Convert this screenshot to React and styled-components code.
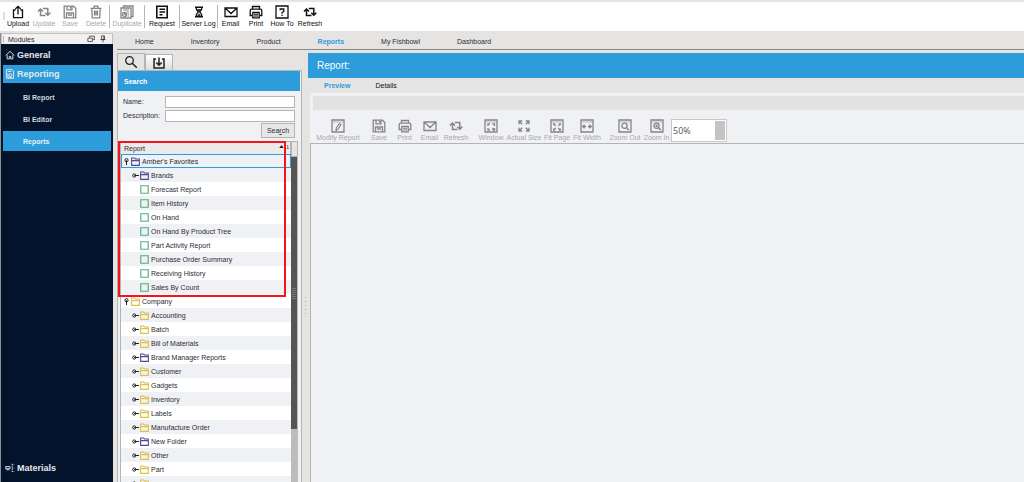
import React, { useState } from 'react'
import styled, { createGlobalStyle, css } from 'styled-components'

const theme = {
  blue: '#2d9cdb',
  navy: '#03132c',
  grey: '#e4e4e4',
  panel: '#f0f1f5',
  line: '#b4b4b0',
  text: '#2c2c34',
  disabled: '#a9a9ab',
}

const GlobalStyle = createGlobalStyle`
  * { box-sizing: border-box; }
  body {
    margin: 0;
    font-family: "Liberation Sans", Arial, sans-serif;
    font-size: 7px;
    line-height: 9px;
    color: ${theme.text};
    background: ${theme.grey};
  }
  button, input, select { font: inherit; color: inherit; margin: 0; }
  a { color: inherit; text-decoration: none; }
  ul { list-style: none; margin: 0; padding: 0; }
`

// icons, all on a 14 x 14 grid
const frame = <path d="M1 1h12v12H1z" />
const dots = <path d="M2.5 3h9" strokeDasharray="1 1" strokeWidth="1" />
const refresh = (
  <path
    d="M8.500 10.500H3.500V4.500M1 6.500l2.500-2.500L6 6.500M5.800 3.500h5v6M8.300 7.700l2.500 2.500 2.500-2.500"
    strokeWidth="1.500"
  />
)
const printer = (
  <>
    <path d="M3.500 4V1.500h7V4M3.500 10.500H1.200V5.800Q1.200 4.200 2.800 4.200h8.400q1.600 0 1.600 1.600v4.700h-2.300" />
    <path d="M3.800 7.500h6.400v5.300H3.800z" />
    <path d="M5 9.300h4M5 11h4" strokeWidth="1" />
  </>
)
const floppy = (
  <>
    <path d="M1.200 1.200h9.300l2.300 2.300v9.300H1.200z" />
    <path d="M4 1.200v3.600h5V1.200M3.500 12.800V8h7v4.800M7.500 2v1.800M5 10h4" />
  </>
)
const mail = <path d="M1 3h12v8.500H1zM1.300 3.300L7 8.500l5.700-5.200" />

const glyphs = {
  upload: <path d="M4.500 5H2.500v7.700h9V5h-2M7 9.500V1.500M4.300 4L7 1.300 9.700 4" />,
  refresh,
  save: floppy,
  trash: (
    <path d="M1.500 3.300h11M5 3V1.200h4V3M2.800 3.500l.5 9.300h7.400l.5-9.300M5.500 5.500v5M7 5.500v5M8.500 5.500v5" />
  ),
  duplicate: (
    <>
      <path d="M3.500 2.500V1H13v10.500h-1.500M1 3h10v10H1z" />
      <path d="M3 5h6M6.500 7H9M7.500 9H9M7.500 11H9" strokeWidth="1" />
      <circle cx="4.500" cy="9.500" r="2" />
      <path d="M4.500 8v1.500H6" strokeWidth="1" />
    </>
  ),
  request: (
    <>
      <path d="M1.800 1.200h10.400v11.600H1.800z" strokeWidth="1.600" />
      <path d="M4.500 4.200h5.500M4.500 7h5.500M4.500 9.800h3" strokeWidth="1.400" />
    </>
  ),
  hourglass: (
    <>
      <path d="M3 2.200h8M3 11.800h8" strokeWidth="1.600" />
      <path d="M4.300 2.500v1.900L6.300 7l-2 2.600v1.900M9.700 2.500v1.900L7.700 7l2 2.600v1.900" />
      <path d="M5 4.500h4L7 6.800zM7 8.800l1.500 2h-3z" fill="currentColor" strokeWidth="0.500" />
    </>
  ),
  mail,
  print: printer,
  help: (
    <>
      {frame}
      <path d="M5.200 5.300V4h3.600v2.300L7 7.500v1.200M7 9.700v1.300" />
    </>
  ),
  modify: (
    <>
      {frame}
      {dots}
      <path d="M5 11.500l.3-2.500 3-4.500 1.700 1.100-3 4.500z" strokeWidth="1.100" />
    </>
  ),
  windowFit: (
    <>
      {frame}
      {dots}
      <path d="M4 7V5h2M8.500 5h2v2M4 9v2h2M10.500 9v2h-2M8.500 9l1.500 1.500" />
    </>
  ),
  actual: (
    <path d="M2 5.200V2h3.200M2.200 2.200l3 3M8.800 2H12v3.200M11.800 2.200l-3 3M2 8.800V12h3.200M2.200 11.800l3-3M12 8.800V12H8.800M11.800 11.800l-3-3" />
  ),
  fitPage: (
    <>
      {frame}
      {dots}
      <path d="M3.700 6.300V5h1.500M8.800 5h1.500v1.300M3.700 9.500V11h1.500M10.300 9.500V11H8.800M4 5.300L5.800 6.800M10 5.300L8.200 6.800M4 10.700L5.800 9M10 10.700L8.200 9" />
    </>
  ),
  fitWidth: (
    <>
      {frame}
      {dots}
      <path d="M3 7.500h3M11 7.500H8M4.500 5.800L2.800 7.500l1.700 1.700M9.500 5.800l1.700 1.700-1.700 1.700" />
    </>
  ),
  zoomOut: (
    <>
      {frame}
      {dots}
      <circle cx="6.500" cy="6.800" r="2.600" />
      <path d="M8.500 8.800l2.500 2.500" />
    </>
  ),
  zoomIn: (
    <>
      {frame}
      {dots}
      <circle cx="6.500" cy="6.800" r="2.600" />
      <path d="M8.500 8.800l2.500 2.500M5.300 6.800h2.400M6.500 5.600v2.400" />
    </>
  ),
  search: (
    <>
      <circle cx="5.500" cy="5.500" r="3.800" />
      <path d="M8.300 8.300l4.500 4.500" strokeWidth="1.500" />
    </>
  ),
  download: (
    <path d="M4 3H2v9h10V3h-2M7 1.500v7.500M4.300 6.500L7 9.200l2.700-2.700" strokeWidth="1.500" />
  ),
  home: <path d="M1 7.500L7 2l6 5.500M3 7v5.500h3V9h2v3.500h3V7" />,
  report: (
    <>
      <path d="M2 1h8l2 2v10H2zM4 3.500h5" />
      <circle cx="7.500" cy="8.500" r="2" />
      <path d="M4 6v5.500h6" />
    </>
  ),
  materials: (
    <>
      <path d="M1 5h6v3H1zM2 9.500h4" />
      <path d="M10 1v12M10 2.500h3M10 7h3M10 12h3" strokeDasharray="1.500 1" />
    </>
  ),
  floatWindow: <path d="M4.500 4.500V2h8.500v6h-2.500M1.500 5.500h8v6h-8z" />,
  pin: <path d="M4.500 1.500h5V8h-5zM2.500 8h9M7 8v5M8.500 2v6" />,
  folder: <path d="M1 3V1.500h4.500L7 3h6v10H1zM1 5.700h12" strokeWidth="1.700" />,
  doc: <path d="M1.200 1.200h11.600v11.600H1.200z" strokeWidth="1.800" />,
  closed: (
    <>
      <circle cx="4.500" cy="7" r="3.200" strokeWidth="2" />
      <path d="M4.500 7H14" strokeWidth="2" />
    </>
  ),
  open: (
    <>
      <circle cx="7" cy="4.500" r="3.200" strokeWidth="2" />
      <path d="M7 4.500V14" strokeWidth="2" />
    </>
  ),
}

function Icon({ name, size = 14, color }) {
  return (
    <Svg viewBox="0 0 14 14" width={size} height={size} $color={color} aria-hidden="true">
      {glyphs[name]}
    </Svg>
  )
}

const mainTools = [
  { label: 'Upload', icon: 'upload', width: 26 },
  { label: 'Update', icon: 'refresh', width: 26, disabled: true },
  { label: 'Save', icon: 'save', width: 26, disabled: true },
  { label: 'Delete', icon: 'trash', width: 26, disabled: true },
  { divider: true },
  { label: 'Duplicate', icon: 'duplicate', width: 34, disabled: true },
  { divider: true },
  { label: 'Request', icon: 'request', width: 34 },
  { divider: true },
  { label: 'Server Log', icon: 'hourglass', width: 37 },
  { divider: true },
  { label: 'Email', icon: 'mail', width: 25 },
  { label: 'Print', icon: 'print', width: 26 },
  { label: 'How To', icon: 'help', width: 26 },
  { label: 'Refresh', icon: 'refresh', width: 30 },
]

const reportTools = [
  [{ label: 'Modify Report', icon: 'modify', width: 44 }],
  [
    { label: 'Save', icon: 'save', width: 26 },
    { label: 'Print', icon: 'print', width: 25 },
    { label: 'Email', icon: 'mail', width: 25 },
    { label: 'Refresh', icon: 'refresh', width: 28 },
  ],
  [
    { label: 'Window', icon: 'windowFit', width: 30 },
    { label: 'Actual Size', icon: 'actual', width: 36 },
    { label: 'Fit Page', icon: 'fitPage', width: 30 },
    { label: 'Fit Width', icon: 'fitWidth', width: 30 },
  ],
  [
    { label: 'Zoom Out', icon: 'zoomOut', width: 34 },
    { label: 'Zoom In', icon: 'zoomIn', width: 29 },
  ],
]

const pages = ['Home', 'Inventory', 'Product', 'Reports', 'My Fishbowl', 'Dashboard']

const folder = (name, color = '#dcc24a') => ({ name, depth: 1, icon: 'folder', color, handle: 'closed' })
const report = name => ({ name, depth: 1, icon: 'doc', color: '#4fae7f' })
const purple = '#524a8e'

const tree = [
  { name: "Amber's Favorites", depth: 0, icon: 'folder', color: purple, handle: 'open' },
  folder('Brands', purple),
  report('Forecast Report'),
  report('Item History'),
  report('On Hand'),
  report('On Hand By Product Tree'),
  report('Part Activity Report'),
  report('Purchase Order Summary'),
  report('Receiving History'),
  report('Sales By Count'),
  { name: 'Company', depth: 0, icon: 'folder', color: '#dcc24a', handle: 'open' },
  folder('Accounting'),
  folder('Batch'),
  folder('Bill of Materials'),
  folder('Brand Manager Reports', purple),
  folder('Customer'),
  folder('Gadgets'),
  folder('Inventory'),
  folder('Labels'),
  folder('Manufacture Order'),
  folder('New Folder', purple),
  folder('Other'),
  folder('Part'),
  folder(''),
]

function Tool({ label, icon, width, disabled }) {
  return (
    <ToolButton type="button" $width={width} disabled={disabled}>
      <Icon name={icon} />
      <span>{label}</span>
    </ToolButton>
  )
}

function Modules() {
  return (
    <Sidebar>
      <ModulesHeader>
        <Grip />
        <ModulesTitle>Modules</ModulesTitle>
        <IconButton type="button" aria-label="Float"><Icon name="floatWindow" size={8} /></IconButton>
        <IconButton type="button" aria-label="Pin"><Icon name="pin" size={8} /></IconButton>
      </ModulesHeader>
      <ModuleNav>
        <ModuleLink href="#general"><Icon name="home" size={10} />General</ModuleLink>
        <ModuleLink href="#reporting" $active><Icon name="report" size={10} />Reporting</ModuleLink>
        <SubMenu>
          <li><SubLink href="#bi-report">BI Report</SubLink></li>
          <li><SubLink href="#bi-editor">BI Editor</SubLink></li>
          <li><SubLink href="#reports" $active>Reports</SubLink></li>
        </SubMenu>
        <ModuleLink href="#materials" $last><Icon name="materials" size={10} />Materials</ModuleLink>
      </ModuleNav>
    </Sidebar>
  )
}

function ReportTree() {
  const [selected, setSelected] = useState(0)

  return (
    <TreeBox>
      <TreeMain>
        <TreeHeader>
          Report
          <Sort><SortArrow viewBox="0 0 6 4"><path d="M3 0l3 4H0z" /></SortArrow>1</Sort>
        </TreeHeader>
        <ul>
          {tree.map((row, i) => (
            <li key={row.name}>
              <Row
                type="button"
                $depth={row.depth}
                $shaded={i % 2 === 1}
                $selected={selected === i}
                onClick={() => setSelected(i)}
              >
                <Handle>{row.handle && <Icon name={row.handle} size={7} color="#222" />}</Handle>
                <Icon name={row.icon} size={9} color={row.color} />
                <RowName>{row.name}</RowName>
              </Row>
            </li>
          ))}
        </ul>
      </TreeMain>
      <Scrollbar>
        <ScrollCorner />
        <Thumb><ThumbGrip /></Thumb>
      </Scrollbar>
      <Highlight />
    </TreeBox>
  )
}

function SearchPanel() {
  return (
    <SearchColumn>
      <Tabs>
        <TabButton type="button" aria-label="Search" $active><Icon name="search" /></TabButton>
        <TabButton type="button" aria-label="Import"><Icon name="download" /></TabButton>
      </Tabs>
      <SearchBox>
        <SearchTitle>Search</SearchTitle>
        <Form onSubmit={e => e.preventDefault()}>
          <label htmlFor="name">Name:</label>
          <TextInput id="name" type="text" />
          <label htmlFor="description">Description:</label>
          <TextInput id="description" type="text" />
          <SearchButton type="submit">Sea<u>r</u>ch</SearchButton>
        </Form>
        <ReportTree />
      </SearchBox>
    </SearchColumn>
  )
}

function ReportPanel() {
  return (
    <ReportColumn>
      <ReportTitle>Report:</ReportTitle>
      <ReportTabs>
        <PageLink href="#preview" $active $strong>Preview</PageLink>
        <PageLink href="#details" $strong>Details</PageLink>
      </ReportTabs>
      <Preview>
        <StatusBar />
        <ReportToolbar>
          {reportTools.map((group, i) => (
            <ToolGroup key={i}>
              {group.map(tool => <Tool key={tool.label} {...tool} disabled />)}
            </ToolGroup>
          ))}
          <ZoomSelect aria-label="Zoom" defaultValue="50%">
            <option>50%</option>
            <option>100%</option>
          </ZoomSelect>
        </ReportToolbar>
        <Canvas />
      </Preview>
    </ReportColumn>
  )
}

function App() {
  return (
    <Page>
      <GlobalStyle />
      <Toolbar>
        <ToolbarGrip />
        {mainTools.map((tool, i) => (
          tool.divider ? <Divider key={i} /> : <Tool key={tool.label + i} {...tool} />
        ))}
      </Toolbar>
      <Body>
        <Modules />
        <Content>
          <PageNav>
            {pages.map(page => (
              <PageLink key={page} href="#page" $active={page === 'Reports'} $strong={page === 'Reports'}>
                {page}
              </PageLink>
            ))}
          </PageNav>
          <Workspace>
            <SearchPanel />
            <Splitter><SplitterDots /></Splitter>
            <ReportPanel />
          </Workspace>
        </Content>
      </Body>
    </Page>
  )
}

export default App

//styled-components
const Svg = styled.svg`
  display: block;
  flex: none;
  fill: none;
  stroke: currentColor;
  stroke-width: 1.3;
  color: ${({ $color }) => $color || 'inherit'};
`

const Page = styled.div`
  display: flex;
  flex-direction: column;
  height: 100vh;
  overflow: hidden;
`

const Toolbar = styled.header`
  display: flex;
  align-items: flex-start;
  flex: none;
  height: 31px;
  padding-top: 3px;
  background: #fefefe;
  border-top: 2px solid ${theme.grey};
`

const ToolbarGrip = styled.div`
  width: 2px;
  height: 8px;
  margin: 7px 0 0 3px;
  background: #ddd;
`

const Divider = styled.div`
  width: 1px;
  height: 23px;
  background: #b5b5b5;
`

const ToolButton = styled.button`
  display: flex;
  flex-direction: column;
  align-items: center;
  flex: none;
  width: ${({ $width }) => $width}px;
  padding: 0;
  border: 0;
  background: none;
  color: #111;
  white-space: nowrap;

  &:disabled {
    color: ${theme.disabled};
  }

  &:disabled svg {
    color: #858587;
  }
`

const Body = styled.div`
  display: flex;
  flex: 1;
  min-height: 0;
  padding-top: 2px;
`

const Sidebar = styled.aside`
  display: flex;
  flex-direction: column;
  flex: none;
  width: 113px;
  border-left: 1px solid #8d9097;
`

const ModulesHeader = styled.div`
  display: flex;
  align-items: center;
  flex: none;
  height: 11px;
  padding: 0 5px 0 1px;
  gap: 4px;
  background: #f1f1f1;
  border: 1px solid #c2c2c2;
  border-bottom: 0;
`

const Grip = styled.div`
  width: 1px;
  height: 7px;
  background: #bbb;
`

const ModulesTitle = styled.span`
  flex: 1;
`

const IconButton = styled.button`
  padding: 0;
  border: 0;
  background: none;
`

const ModuleNav = styled.nav`
  display: flex;
  flex-direction: column;
  flex: 1;
  padding: 2px 2px 4px;
  background: ${theme.navy};
  color: #e6e8ec;
  font-weight: 700;
`

const ModuleLink = styled.a`
  display: flex;
  align-items: center;
  gap: 2px;
  height: 18px;
  margin-bottom: 1px;
  padding-left: 2px;
  font-size: 9px;
  background: ${({ $active }) => ($active ? theme.blue : 'none')};
  margin-top: ${({ $last }) => ($last ? 'auto' : 0)};
`

const SubMenu = styled.ul`
  display: flex;
  flex-direction: column;
  gap: 2px;
  padding-top: 3px;
`

const SubLink = styled.a`
  display: flex;
  align-items: center;
  height: 20px;
  padding-left: 20px;
  color: ${({ $active }) => ($active ? '#e6f2fa' : '#d3d6dc')};
  background: ${({ $active }) => ($active ? theme.blue : 'none')};
`

const Content = styled.main`
  display: flex;
  flex-direction: column;
  flex: 1;
  min-width: 0;
  padding-left: 4px;
  background: #e5e4e3;
`

const PageNav = styled.nav`
  display: flex;
  align-items: center;
  gap: 37px;
  flex: none;
  height: 17px;
  padding-left: 18px;
  border-bottom: 1px solid #8c8c88;
`

const PageLink = styled.a`
  color: ${({ $active }) => ($active ? theme.blue : theme.text)};
  ${({ $strong, $active }) => $strong && css`
    font-weight: ${$active ? 700 : 400};
    color: ${$active ? theme.blue : '#111'};
  `}
`

const Workspace = styled.div`
  display: flex;
  flex: 1;
  min-height: 0;
  padding-top: 3px;
`

const SearchColumn = styled.section`
  display: flex;
  flex-direction: column;
  flex: none;
  width: 185px;
`

const Tabs = styled.div`
  display: flex;
  align-items: flex-end;
  flex: none;
  height: 17px;
`

const TabButton = styled.button`
  display: flex;
  align-items: center;
  justify-content: center;
  width: 28px;
  height: ${({ $active }) => ($active ? 17 : 16)}px;
  padding: 0;
  border: 1px solid ${theme.line};
  border-bottom: 0;
  background: ${({ $active }) => ($active ? theme.grey : 'linear-gradient(#fff, #ddd)')};
  color: #222;
`

const SearchBox = styled.div`
  display: flex;
  flex-direction: column;
  flex: 1;
  min-height: 0;
  padding-right: 1px;
  border: 1px solid ${theme.line};
  border-bottom: 0;
  background: ${theme.panel};
`

const SearchTitle = styled.h2`
  flex: none;
  margin: 0;
  padding: 6px 6px 5px;
  font-size: 7px;
  color: #fff;
  background: ${theme.blue};
`

const Form = styled.form`
  display: grid;
  grid-template-columns: 40px 1fr;
  grid-auto-rows: 13px;
  align-items: center;
  gap: 1px 2px;
  flex: none;
  padding: 4px 5px;
`

const TextInput = styled.input`
  width: 100%;
  height: 12px;
  padding: 0 2px;
  border: 1px solid ${theme.line};
  background: #fff;
`

const SearchButton = styled.button`
  grid-column: 2;
  justify-self: end;
  align-self: start;
  width: 34px;
  height: 15px;
  padding: 0;
  border: 1px solid ${theme.line};
  background: #e6e6e6;
`

const TreeBox = styled.div`
  position: relative;
  display: flex;
  flex: 1;
  min-height: 0;
  margin: 1px 2px 0 2px;
  border-top: 1px solid ${theme.line};
  border-left: 1px solid ${theme.line};
`

const TreeMain = styled.div`
  flex: 1;
  min-width: 0;
  overflow: hidden;
  background: #fff;
`

const TreeHeader = styled.div`
  display: flex;
  align-items: center;
  justify-content: space-between;
  height: 12px;
  padding: 0 1px 0 3px;
  background: #ebebeb;
  border-right: 1px solid ${theme.line};
`

const Sort = styled.span`
  display: flex;
  align-items: center;
  gap: 2px;
  padding-bottom: 3px;
  font-size: 5px;
  line-height: 6px;
`

const SortArrow = styled.svg`
  width: 5px;
  height: 3px;
  fill: #222;
`

const Row = styled.button`
  display: flex;
  align-items: center;
  gap: 1px;
  width: 100%;
  height: 14px;
  padding: 0 0 0 ${({ $depth }) => 2 + $depth * 9}px;
  border: 0;
  text-align: left;
  background: ${({ $shaded, $selected }) => ($shaded || $selected ? theme.panel : '#fff')};
  ${({ $selected }) => $selected && css`
    box-shadow: inset 0 0 0 1px ${theme.blue};
  `}
`

const Handle = styled.span`
  width: 7px;
`

const RowName = styled.span`
  padding-left: 1px;
`

const Scrollbar = styled.div`
  display: flex;
  flex-direction: column;
  flex: none;
  width: 7px;
  background: #bcbcbc;
`

const ScrollCorner = styled.div`
  height: 15px;
  background: ${theme.grey};
  border: 1px solid ${theme.line};
  border-top: 0;
`

const Thumb = styled.div`
  display: flex;
  align-items: center;
  justify-content: center;
  height: 80%;
  margin-right: 1px;
  background: #555;
`

const ThumbGrip = styled.div`
  width: 4px;
  height: 11px;
  background: repeating-linear-gradient(#777 0 1px, #555 1px 2px);
`

// red frame drawn over the favorites branch
const Highlight = styled.div`
  position: absolute;
  top: -1px;
  left: -3px;
  right: 12px;
  height: 156px;
  border: 2px solid #f5141b;
  pointer-events: none;
`

const Splitter = styled.div`
  display: flex;
  align-items: center;
  justify-content: center;
  flex: none;
  width: 6px;
  padding-top: 76px;
`

const SplitterDots = styled.div`
  width: 1px;
  height: 18px;
  background: repeating-linear-gradient(#aaa 0 1px, transparent 1px 4px);
`

const ReportColumn = styled.section`
  display: flex;
  flex-direction: column;
  flex: 1;
  min-width: 0;
`

const ReportTitle = styled.h1`
  flex: none;
  margin: 0;
  padding: 7px 9px 6px;
  font-size: 10px;
  font-weight: 400;
  line-height: 12px;
  color: #fff;
  background: ${theme.blue};
`

const ReportTabs = styled.nav`
  display: flex;
  align-items: center;
  gap: 25px;
  flex: none;
  height: 15px;
  padding-left: 16px;
`

const Preview = styled.div`
  display: flex;
  flex-direction: column;
  flex: 1;
  margin-left: 2px;
  padding-top: 3px;
  background: ${theme.panel};
`

const StatusBar = styled.div`
  flex: none;
  height: 14px;
  margin-left: 3px;
  background: #e2e2e2;
`

const ReportToolbar = styled.div`
  display: flex;
  align-items: flex-end;
  flex: none;
  height: 33px;
  padding: 0 6px 1px;
`

const ToolGroup = styled.div`
  display: flex;
  margin-right: 6px;

  &:nth-last-child(2) {
    margin-right: 0;
  }
`

const ZoomSelect = styled.select`
  appearance: none;
  flex: none;
  width: 56px;
  height: 23px;
  padding: 0 12px 0 1px;
  border: 1px solid #c9c8c4;
  border-radius: 0;
  font-family: "Open Sans", sans-serif;
  font-size: 9px;
  line-height: 12px;
  color: #555;
  background: linear-gradient(#c4c4c4, #c4c4c4) right 1px center / 10px 19px no-repeat #fff;
`

const Canvas = styled.div`
  flex: 1;
  border-top: 1px solid ${theme.line};
  border-left: 1px solid ${theme.line};
`
